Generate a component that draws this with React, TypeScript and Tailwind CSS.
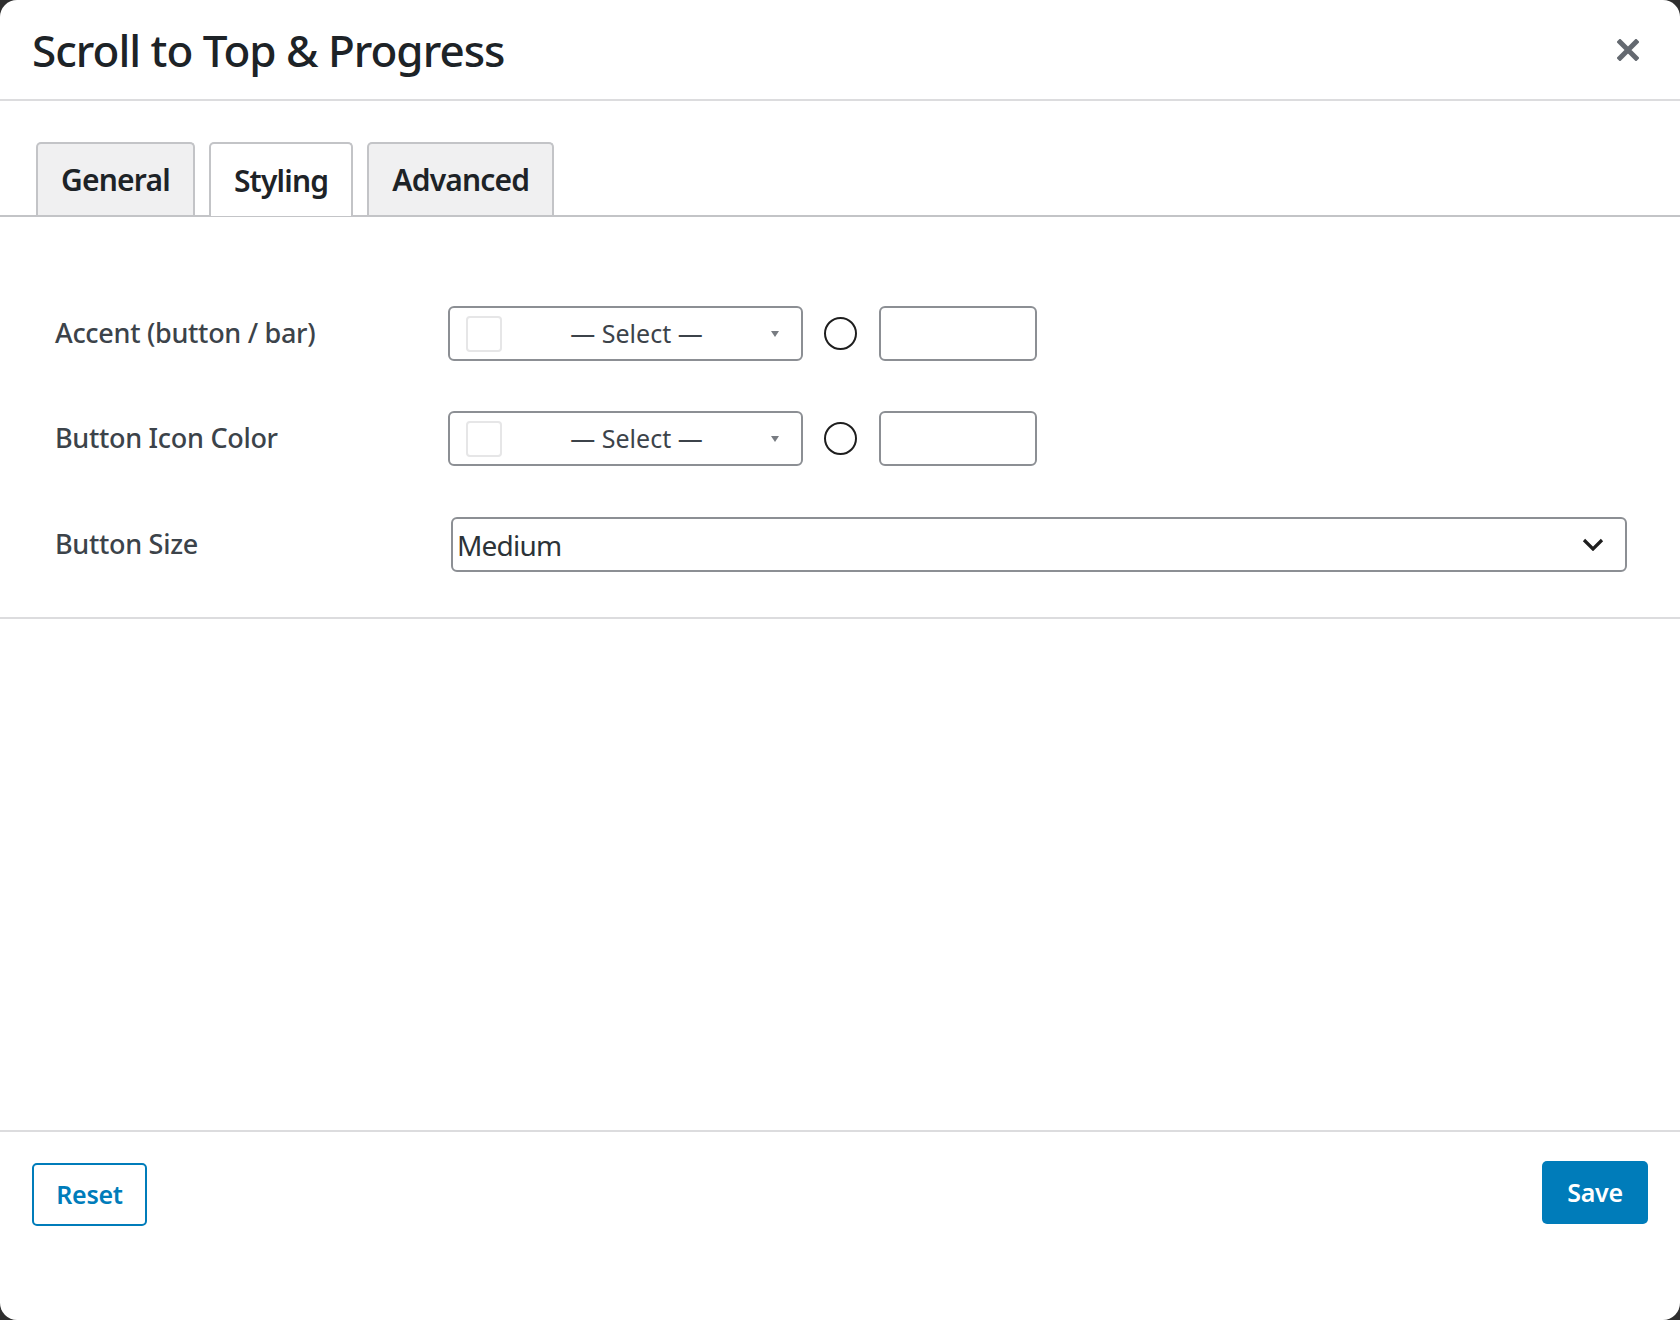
import React from 'react';

const font = { fontFamily: '"Noto Sans", "Open Sans", Arial, sans-serif' };

const ColorRow = ({ label }: { label: string }) => (
  <div className="flex items-center">
    <div className="w-[393px] text-[27px] font-medium tracking-[-0.3px] text-[#3c434a]">{label}</div>
    <button className="w-[355px] h-[55px] border-2 border-[#8c8f94] rounded-[6px] bg-white flex items-center pl-[16px] pr-[22px]">
      <span className="w-[36px] h-[36px] border-2 border-[#e6e6e7] rounded-[4px] bg-white" />
      <span className="flex-1 text-center text-[25px] text-[#3c434a]">— Select —</span>
      <svg width="8" height="6" viewBox="0 0 8 6">
        <path d="M0 0 L8 0 L4 6 Z" fill="#787c82" />
      </svg>
    </button>
    <span className="ml-[21px] w-[33px] h-[33px] rounded-full border-2 border-[#1e1e1e]" />
    <input className="ml-[22px] w-[158px] h-[55px] border-2 border-[#8c8f94] rounded-[6px] bg-white outline-none" />
  </div>
);

const Tab = ({ label, active }: { label: string; active?: boolean }) => (
  <div
    className={
      active
        ? 'h-[74px] -mb-[1px] px-[23px] flex items-center border-2 border-b-0 border-[#c3c4c7] bg-white rounded-t-[5px] text-[30px] font-semibold tracking-[-0.8px] text-[#1d2327]'
        : 'h-[73px] px-[23px] flex items-center border-2 border-b-0 border-[#c3c4c7] bg-[#f0f0f1] rounded-t-[5px] text-[30px] font-semibold tracking-[-0.8px] text-[#1d2327]'
    }
  >
    {label}
  </div>
);

export default function App() {
  return (
    <div className="w-full h-[1320px] bg-[#2f2f2f]" style={font}>
      <div className="h-full bg-white rounded-[17px] flex flex-col">
        <div className="h-[101px] shrink-0 border-b-2 border-[#dcdcde] flex items-center justify-between pl-[32px] pr-[41px]">
          <h1 className="text-[44px] font-medium tracking-[-1px] text-[#1d2327] leading-none">Scroll to Top &amp; Progress</h1>
          <svg width="22" height="22" viewBox="0 0 22 22">
            <path d="M3 3 L19 19 M19 3 L3 19" stroke="#646970" strokeWidth="5" strokeLinecap="square" />
          </svg>
        </div>

        <div className="pt-[41px] pl-[36px] flex items-end gap-[14px] border-b-2 border-[#c3c4c7]">
          <Tab label="General" />
          <Tab label="Styling" active />
          <Tab label="Advanced" />
        </div>

        <div className="pl-[55px] pr-[53px] pt-[89px] pb-[45px] border-b-2 border-[#dcdcde] flex flex-col gap-[50px]">
          <ColorRow label="Accent (button / bar)" />
          <ColorRow label="Button Icon Color" />
          <div className="flex items-center mt-[1px]">
            <div className="w-[396px] text-[27px] font-medium tracking-[-0.3px] text-[#3c434a]">Button Size</div>
            <div className="flex-1 h-[55px] border-2 border-[#8c8f94] rounded-[6px] flex items-center justify-between pl-[4px] pr-[21px]">
              <span className="text-[28px] tracking-[-0.8px] text-[#2c3338]">Medium</span>
              <svg width="22" height="13" viewBox="0 0 22 13">
                <path d="M2 2 L11 11 L20 2" fill="none" stroke="#1e1e1e" strokeWidth="3.2" />
              </svg>
            </div>
          </div>
        </div>

        <div className="flex-1" />

        <div className="h-[190px] shrink-0 border-t-2 border-[#dcdcde] flex items-start justify-between pl-[32px] pr-[32px] pt-[29px]">
          <button className="mt-[2px] w-[115px] h-[63px] border-2 border-[#007cba] rounded-[5px] bg-white text-[25px] font-semibold tracking-[-0.3px] text-[#007cba]">
            Reset
          </button>
          <button className="w-[106px] h-[63px] rounded-[5px] bg-[#007cba] text-[25px] font-semibold tracking-[-0.3px] text-white">
            Save
          </button>
        </div>
      </div>
    </div>
  );
}
